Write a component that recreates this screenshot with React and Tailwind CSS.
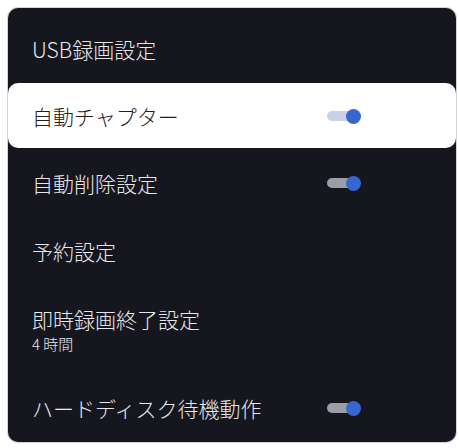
const Toggle = ({ light }) => (
    <div className="relative w-[34px] h-[16px] flex items-center">
        <div className={`w-[30px] h-[10px] rounded-full ${light ? "bg-[#c9d2e4]" : "bg-[#9a9ea8]"}`} />
        <div className="absolute right-0 top-px w-[15px] h-[15px] rounded-full bg-[#3866cf]" />
    </div>
);

const Row = ({ label, sub, toggle, active, height }) => (
    <div
        className={`flex items-center justify-between pl-6 pr-[95px] ${height} ${
            active ? "bg-white rounded-[10px] text-[#1f2023]" : "text-[#e6e7ea]"
        }`}
    >
        <div className="flex flex-col">
            <span className="text-[21px] leading-[28px] font-light">{label}</span>
            {sub && <span className="text-[15px] leading-[20px] mt-px font-light">{sub}</span>}
        </div>
        {toggle && <Toggle light={active} />}
    </div>
);

export default function App() {
    return (
        <div
            className="w-[459px] h-[448px] bg-white pt-[8px] pl-[8px]"
            style={{ fontFamily: '"Noto Sans CJK JP", "Noto Sans", sans-serif' }}
        >
            <div className="w-[448px] h-[434px] bg-[#16161f] rounded-[10px] flex flex-col shadow-[0_0_0_1px_#d4d4d8]">
                {/* Header */}
                <div className="h-[75px] pt-[9px] pl-6 flex items-center text-[21px] font-light text-[#e6e7ea]">
                    USB録画設定
                </div>
                <Row label="自動チャプター" toggle active height="h-[65px]" />
                <Row label="自動削除設定" toggle height="h-[69px]" />
                <Row label="予約設定" height="h-[68px]" />
                <Row label="即時録画終了設定" sub="4 時間" height="h-[88px]" />
                <Row label="ハードディスク待機動作" toggle height="h-[69px]" />
            </div>
        </div>
    );
}
